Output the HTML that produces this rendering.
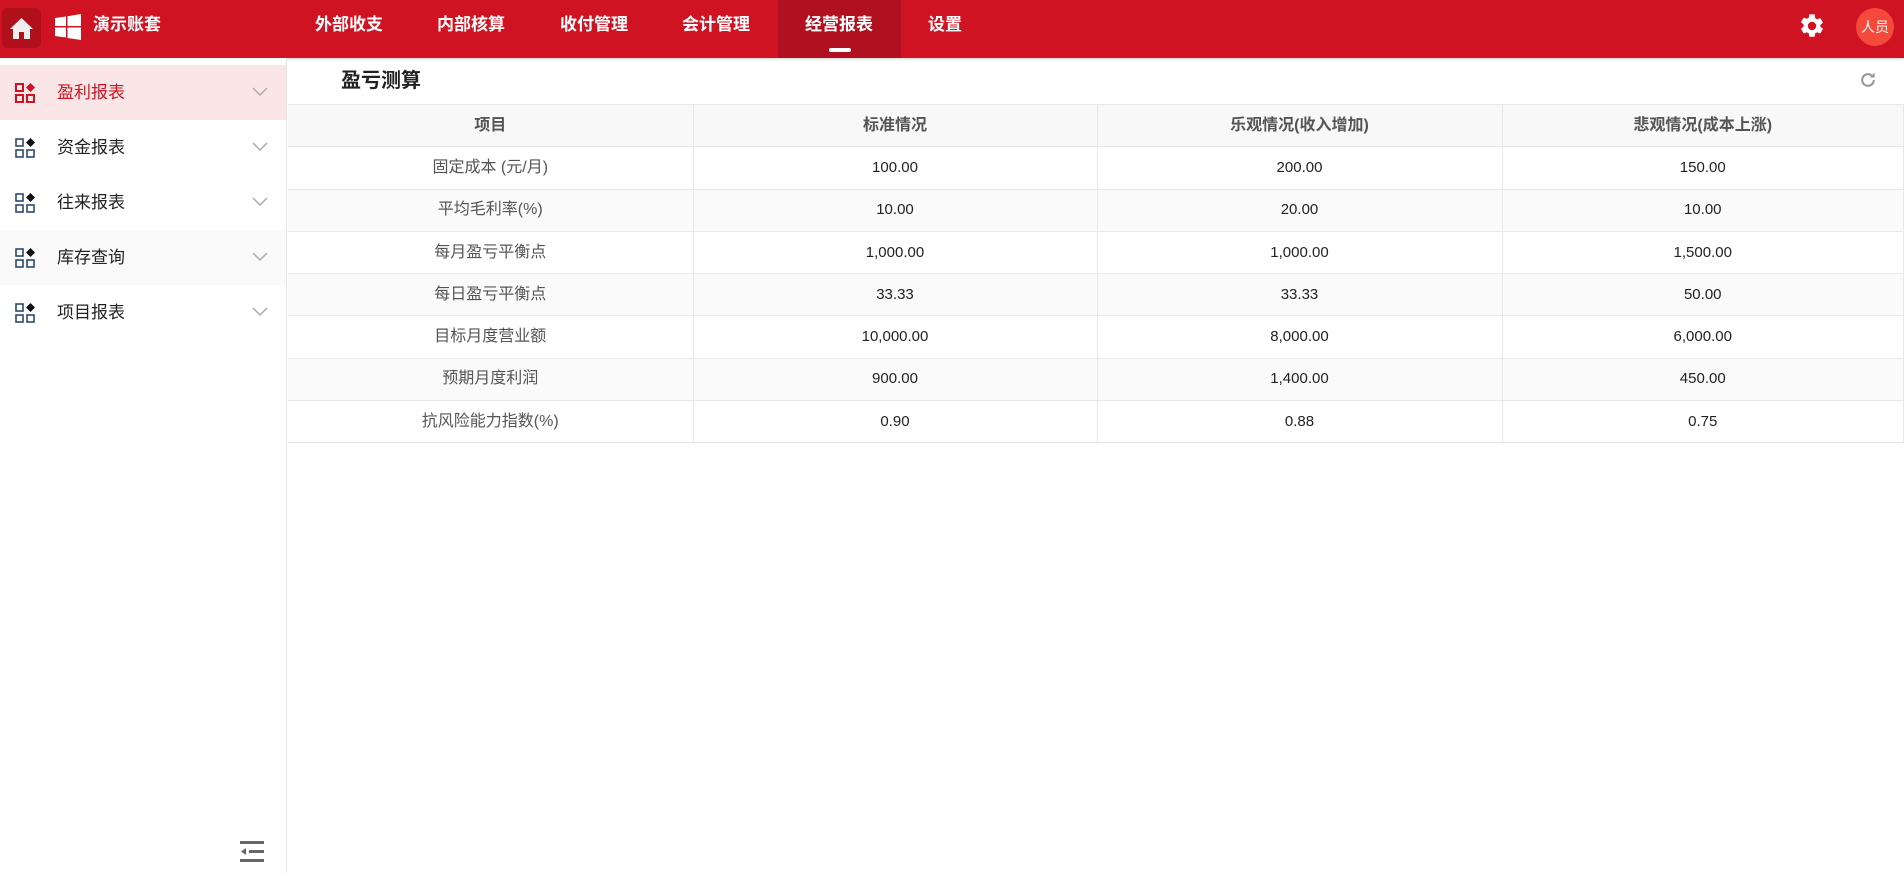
<!DOCTYPE html>
<html><head><meta charset="utf-8"><style>
*{margin:0;padding:0;box-sizing:border-box}
body{width:1904px;height:873px;overflow:hidden;background:#fff;font-family:"Liberation Sans","Noto Sans CJK SC",sans-serif;position:relative}
.top{position:absolute;left:0;top:0;width:1904px;height:58px;background:#cf1322;box-shadow:0 1px 3px rgba(0,0,0,.2)}
.home{position:absolute;left:2px;top:8px;width:39px;height:40px;background:#b0101c;border-radius:6px}
.actbg{position:absolute;left:778px;top:0;width:123px;height:58px;background:#b0101f}
.actbg:after{content:"";position:absolute;left:51px;bottom:6px;width:22px;height:4px;border-radius:2px;background:#fff}
.nav{position:absolute;top:0;height:58px;line-height:50px;color:#fff;font-weight:bold;font-size:17px;white-space:nowrap}
.side{position:absolute;left:0;top:58px;width:287px;height:815px;border-right:1px solid #e4e4e4;background:#fff}
.item{position:absolute;left:0;width:286px;height:55px;line-height:55px;font-size:17px;color:#222}
.item .t{position:absolute;left:57px}
.item svg.ic{position:absolute;left:15px;top:18px}
.item svg.ar{position:absolute;left:252px;top:22px}
.title{position:absolute;left:341px;top:64px;font-size:20px;font-weight:bold;color:#222}
table{position:absolute;left:288px;top:104px;width:1616px;border-collapse:collapse;font-size:15px}
td,th{height:42.3px;line-height:20px;text-align:center;vertical-align:middle;border-top:1px solid #e8e8e8;border-right:1px solid #e8e8e8;color:#222;font-weight:normal}
th{background:#f8f8f8;color:#555;font-weight:bold;font-size:16px}
td:first-child{color:#555;font-size:16px}
tr.g td{background:#fafafa}
tr:last-child td{border-bottom:1px solid #e8e8e8}
</style></head><body>
<div class="top">
 <div class="home"><svg width="39" height="40" viewBox="0 0 39 40"><path d="M19.5 10 L8 21 H11 V31 H17 V24 H22 V31 H28 V21 H31 Z" fill="#eee"/></svg></div>
 <svg style="position:absolute;left:55px;top:14px" width="26" height="26" viewBox="0 0 26 26"><path d="M0 4 L11 2.5 V12 H0Z M12.5 2.3 L26 0 V12 H12.5Z M0 13.5 H11 V23.5 L0 22Z M12.5 13.5 H26 V26 L12.5 24Z" fill="#fff"/></svg>
 <div style="position:absolute;left:93px;top:0;line-height:50px;color:#fff;font-weight:bold;font-size:17px">演示账套</div>
 <div class="actbg"></div>
 <div class="nav" style="left:315px">外部收支</div>
 <div class="nav" style="left:437px">内部核算</div>
 <div class="nav" style="left:560px">收付管理</div>
 <div class="nav" style="left:682px">会计管理</div>
 <div class="nav" style="left:805px">经营报表</div>
 <div class="nav" style="left:928px">设置</div>
 <svg style="position:absolute;left:1798px;top:12px" width="28" height="28" viewBox="0 0 24 24"><path fill="#fff" d="M19.14 12.94c.04-.3.06-.61.06-.94s-.02-.64-.07-.94l2.03-1.58a.49.49 0 0 0 .12-.61l-1.92-3.32a.49.49 0 0 0-.59-.22l-2.39.96a7 7 0 0 0-1.620-.94l-.36-2.54A.48.48 0 0 0 13.92 2h-3.84a.48.48 0 0 0-.48.41l-.36 2.54c-.59.24-1.13.57-1.62.94l-2.39-.96a.49.49 0 0 0-.59.22L2.72 8.47a.47.47 0 0 0 .12.61l2.03 1.58c-.05.3-.07.62-.07.94s.02.64.07.94l-2.03 1.58a.49.49 0 0 0-.12.61l1.92 3.32c.12.22.37.29.59.22l2.39-.96c.5.38 1.03.7 1.62.94l.36 2.54c.05.24.24.41.48.41h3.84c.24 0 .44-.17.47-.41l.36-2.54c.59-.24 1.13-.56 1.62-.94l2.39.96c.22.08.47 0 .59-.22l1.920-3.32a.47.47 0 0 0-.12-.61l-2.01-1.58zM12 15.6A3.6 3.6 0 1 1 12 8.4a3.6 3.6 0 0 1 0 7.2z"/></svg>
 <div style="position:absolute;left:1856px;top:8px;width:38px;height:38px;border-radius:50%;background:#f5493c;color:#fff;font-size:14px;line-height:38px;text-align:center">人员</div>
</div>
<div class="side">
 <div class="item" style="top:7px;background:#fae6e6;color:#cf1322"><svg class="ic" width="22" height="20" viewBox="0 0 22 20"><g fill="none" stroke="#cf1322" stroke-width="2"><rect x="1" y="1" width="7" height="7"/><rect x="1" y="12" width="7" height="7"/><rect x="12" y="12" width="7" height="7"/></g><path d="M15.5 0 L20 4.5 15.5 9 11 4.5Z" fill="#cf1322"/></svg><span class="t">盈利报表</span><svg class="ar" width="16" height="10" viewBox="0 0 16 10"><path d="M1 1 L8 8 15 1" fill="none" stroke="#aaa" stroke-width="1.5"/></svg></div>
 <div class="item" style="top:62px"><svg class="ic" width="22" height="20" viewBox="0 0 22 20"><g fill="none" stroke="#2c4a6b" stroke-width="1.6"><rect x="1" y="1" width="7" height="7"/><rect x="1" y="12" width="7" height="7"/><rect x="12" y="12" width="7" height="7"/></g><path d="M15.5 0 L20 4.5 15.5 9 11 4.5Z" fill="#111"/></svg><span class="t">资金报表</span><svg class="ar" width="16" height="10" viewBox="0 0 16 10"><path d="M1 1 L8 8 15 1" fill="none" stroke="#aaa" stroke-width="1.5"/></svg></div>
 <div class="item" style="top:117px"><svg class="ic" width="22" height="20" viewBox="0 0 22 20"><g fill="none" stroke="#2c4a6b" stroke-width="1.6"><rect x="1" y="1" width="7" height="7"/><rect x="1" y="12" width="7" height="7"/><rect x="12" y="12" width="7" height="7"/></g><path d="M15.5 0 L20 4.5 15.5 9 11 4.5Z" fill="#111"/></svg><span class="t">往来报表</span><svg class="ar" width="16" height="10" viewBox="0 0 16 10"><path d="M1 1 L8 8 15 1" fill="none" stroke="#aaa" stroke-width="1.5"/></svg></div>
 <div class="item" style="top:172px;background:#fafafa"><svg class="ic" width="22" height="20" viewBox="0 0 22 20"><g fill="none" stroke="#2c4a6b" stroke-width="1.6"><rect x="1" y="1" width="7" height="7"/><rect x="1" y="12" width="7" height="7"/><rect x="12" y="12" width="7" height="7"/></g><path d="M15.5 0 L20 4.5 15.5 9 11 4.5Z" fill="#111"/></svg><span class="t">库存查询</span><svg class="ar" width="16" height="10" viewBox="0 0 16 10"><path d="M1 1 L8 8 15 1" fill="none" stroke="#aaa" stroke-width="1.5"/></svg></div>
 <div class="item" style="top:227px"><svg class="ic" width="22" height="20" viewBox="0 0 22 20"><g fill="none" stroke="#2c4a6b" stroke-width="1.6"><rect x="1" y="1" width="7" height="7"/><rect x="1" y="12" width="7" height="7"/><rect x="12" y="12" width="7" height="7"/></g><path d="M15.5 0 L20 4.5 15.5 9 11 4.5Z" fill="#111"/></svg><span class="t">项目报表</span><svg class="ar" width="16" height="10" viewBox="0 0 16 10"><path d="M1 1 L8 8 15 1" fill="none" stroke="#aaa" stroke-width="1.5"/></svg></div>
 <svg style="position:absolute;left:240px;top:783px" width="24" height="22" viewBox="0 0 24 22"><g fill="#666"><rect x="0" y="0" width="24" height="3"/><rect x="9" y="9" width="15" height="3"/><rect x="0" y="18" width="24" height="3"/><path d="M1 10.5 L6 7 V14Z"/></g></svg>
</div>
<div class="title">盈亏测算</div>
<svg style="position:absolute;left:1858px;top:70px" width="20" height="20" viewBox="0 0 24 24"><path d="M19 12a7 7 0 1 1-2.05-4.95" fill="none" stroke="#999" stroke-width="2.5"/><path d="M20 3 V9 H14Z" fill="#999"/></svg>
<table>
<tr><th style="width:405px">项目</th><th style="width:404px">标准情况</th><th style="width:405px">乐观情况(收入增加)</th><th>悲观情况(成本上涨)</th></tr>
<tr><td>固定成本 (元/月)</td><td>100.00</td><td>200.00</td><td>150.00</td></tr>
<tr class="g"><td>平均毛利率(%)</td><td>10.00</td><td>20.00</td><td>10.00</td></tr>
<tr><td>每月盈亏平衡点</td><td>1,000.00</td><td>1,000.00</td><td>1,500.00</td></tr>
<tr class="g"><td>每日盈亏平衡点</td><td>33.33</td><td>33.33</td><td>50.00</td></tr>
<tr><td>目标月度营业额</td><td>10,000.00</td><td>8,000.00</td><td>6,000.00</td></tr>
<tr class="g"><td>预期月度利润</td><td>900.00</td><td>1,400.00</td><td>450.00</td></tr>
<tr><td>抗风险能力指数(%)</td><td>0.90</td><td>0.88</td><td>0.75</td></tr>
</table>
</body></html>
